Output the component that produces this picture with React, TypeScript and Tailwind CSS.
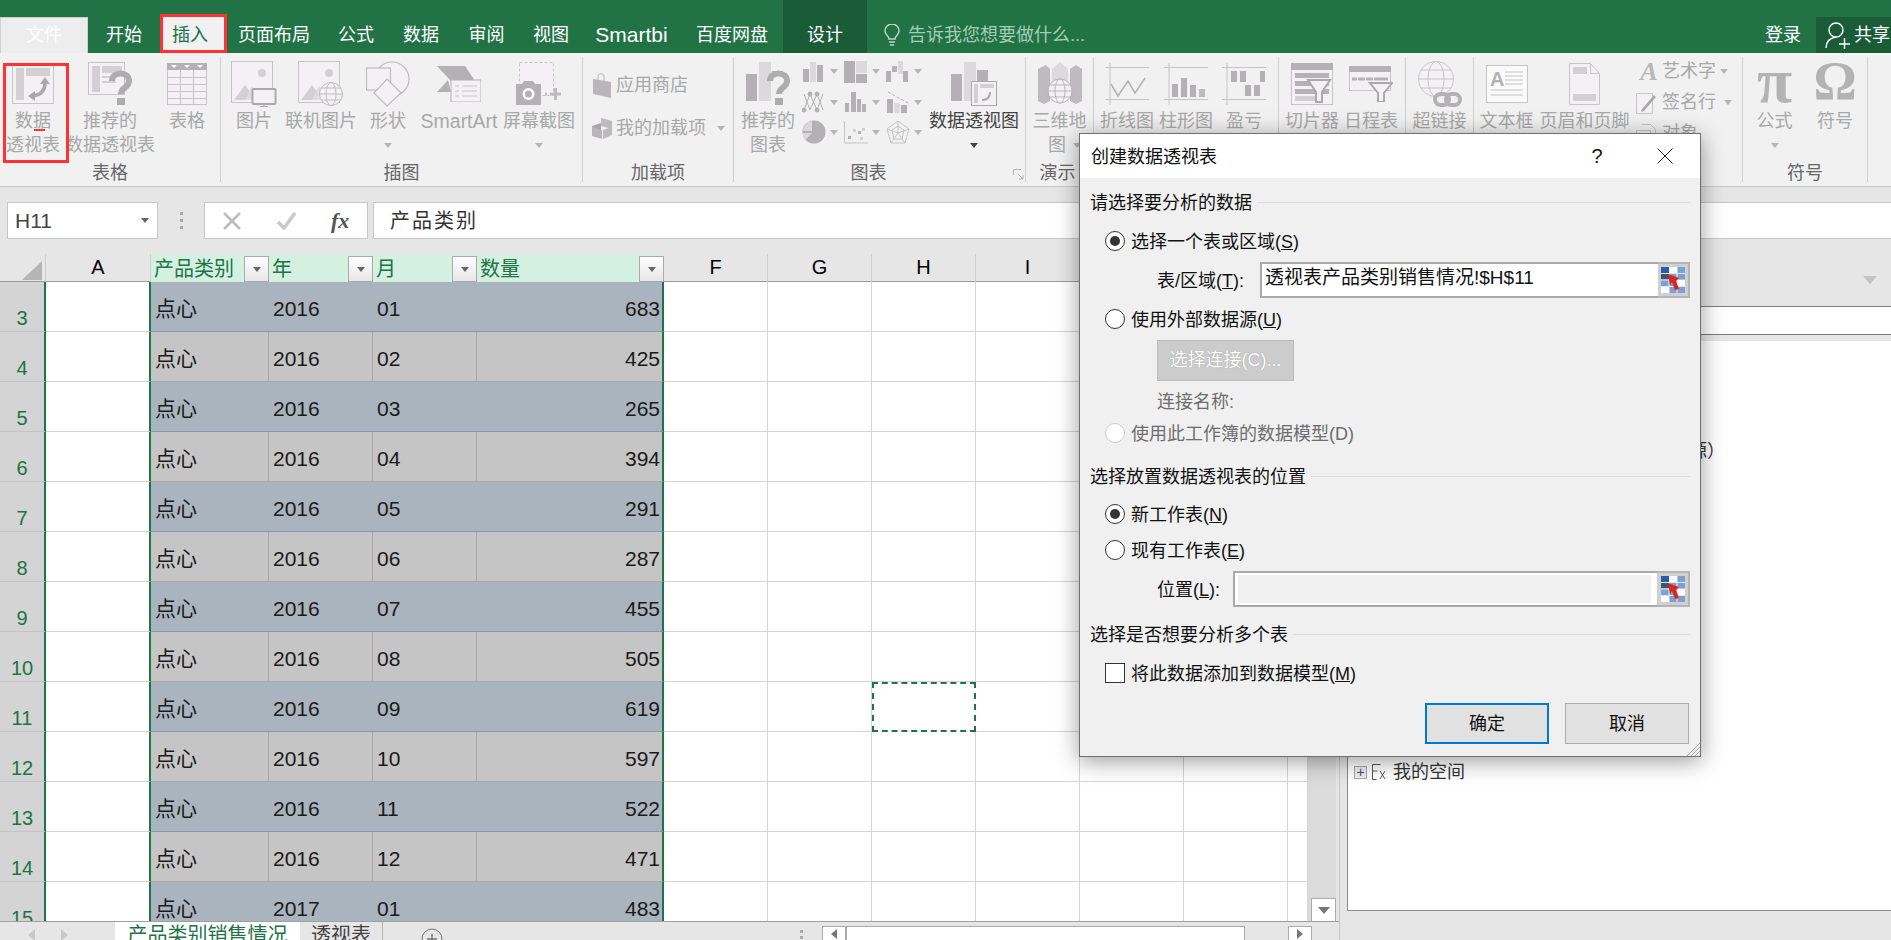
import type { ReactNode } from "react";
import clsx from "clsx";

const G = "#b3b1b3";
const M = "#d2d0d2";
const P = "#f4f1f5";
const S = "#c6c4c6";

const DATA = [683, 425, 265, 394, 291, 287, 455, 505, 619, 597, 522, 471, 483];
const EMPTY_COLS = ["F", "G", "H", "I", "J", "K", "L"];
const ROW_GRID = "grid grid-cols-[46px_105px_118px_104px_104px_187px_104px_104px_104px_104px_104px_104px_20px]";

function Arrow({ className, color = "#b5b5b5" }: { className?: string; color?: string }) {
  return (
    <svg width="8" height="5" viewBox="0 0 10 6" preserveAspectRatio="none" className={className}>
      <polygon points="0,0 10,0 5,6" fill={color} />
    </svg>
  );
}

function PivotIcon() {
  return (
    <svg width="42" height="40" viewBox="0 0 42 40">
      <rect x="0.5" y="0.5" width="41" height="39" fill={P} stroke={S} />
      <rect x="4" y="4" width="8" height="32" fill={M} />
      <rect x="14" y="4" width="24" height="8" fill={M} />
      <path d="M33 19C33 27 28 31 21 32" fill="none" stroke="#a9a9a9" strokeWidth="3.5" />
      <polygon points="33,13 38,20 28,20" fill="#a9a9a9" />
      <polygon points="16,32 23,27 23,37" fill="#a9a9a9" />
    </svg>
  );
}

function RecommendPivotIcon() {
  return (
    <svg width="45" height="44" viewBox="0 0 45 44">
      <rect x="0.5" y="0.5" width="36" height="32" fill={P} stroke={S} />
      <rect x="4" y="4" width="8" height="26" fill={M} />
      <rect x="14" y="4" width="20" height="7" fill={M} />
      <rect x="14" y="14" width="14" height="2" fill={M} />
      <rect x="14" y="19" width="14" height="2" fill={M} />
      <path d="M24 19C24 9 41 9 41 19C41 26 33 25 33 32" fill="none" stroke="#adadad" strokeWidth="6" />
      <rect x="29" y="36" width="8" height="7" fill="#adadad" />
    </svg>
  );
}

function TableIcon() {
  return (
    <svg width="40" height="42" viewBox="0 0 40 42">
      <rect x="0.5" y="0.5" width="39" height="41" fill={P} stroke={S} />
      <rect width="40" height="7" fill={G} />
      <path d="M4 2h6l-3 3zM17 2h6l-3 3zM30 2h6l-3 3z" fill="#fff" />
      <path d="M13.5 7v34M26.5 7v34M0 14.5h40M0 21.5h40M0 28.5h40M0 35.5h40" stroke={S} fill="none" />
    </svg>
  );
}

function PictureIcon({ overlay }: { overlay: "monitor" | "globe" }) {
  return (
    <svg width="46" height="46" viewBox="0 0 46 46">
      <rect x="0.5" y="0.5" width="41" height="41" fill={P} stroke={S} />
      <circle cx="31" cy="12" r="4" fill={M} />
      <polygon points="3,39 14,24 20,32 22,39" fill={M} />
      <polygon points="14,39 21,25 30,39" fill="#dedcde" />
      {overlay === "monitor" ? (
        <g>
          <rect x="21.5" y="28" width="23" height="15" rx="1" fill={P} stroke="#a9a9a9" strokeWidth="2" />
          <path d="M33 43v3M29 45.5h8" stroke="#a9a9a9" />
        </g>
      ) : (
        <g fill={P} stroke="#bdbdbd">
          <circle cx="33" cy="33" r="11.5" />
          <ellipse cx="33" cy="33" rx="5" ry="11.5" />
          <path d="M21.5 33h23M23 27h20M23 39h20" />
        </g>
      )}
    </svg>
  );
}

function ShapesIcon() {
  return (
    <svg width="44" height="46" viewBox="0 0 44 46" fill="none" stroke="#bdbdbd" strokeWidth="1.2">
      <circle cx="26" cy="18" r="17" fill={P} />
      <rect x="0.5" y="7" width="24" height="22" fill={P} />
      <polygon points="21,18 35,32 21,45 8,32" fill={P} />
    </svg>
  );
}

function SmartArtIcon() {
  return (
    <svg width="44" height="36" viewBox="0 0 44 36">
      <polygon points="0,0 28,0 38,15 14,15" fill={G} />
      <polygon points="0,26 14,26 11,14 " fill={G} />
      <rect x="14" y="14" width="30" height="22" fill={P} stroke={G} />
      <path d="M18 20h4M25 20h15M18 25h4M25 25h15M18 30h4M25 30h15" stroke={S} />
    </svg>
  );
}

function ScreenshotIcon() {
  return (
    <svg width="46" height="44" viewBox="0 0 46 44">
      <rect x="3.5" y="0.5" width="34" height="33" fill={P} stroke={S} strokeDasharray="3 2" />
      <path d="M0 22h6l2-3h9l2 3h6v21H0z" fill={G} />
      <circle cx="12.5" cy="32" r="6" fill="#fff" />
      <circle cx="12.5" cy="32" r="3.5" fill={G} />
      <path d="M29 32h2M34 32h11M39.5 26v12" stroke="#bdbdbd" strokeWidth="3" />
    </svg>
  );
}

function StoreIcon() {
  return (
    <svg width="20" height="25" viewBox="0 0 20 25">
      <path d="M1 6l18 3v16L1 21z" fill="#b8b6b8" />
      <path d="M6 7V3c0-3 6-3 6 0v5" fill="none" stroke="#b8b6b8" />
    </svg>
  );
}

function AddinIcon() {
  return (
    <svg width="20" height="21" viewBox="0 0 20 21">
      <polygon points="9,0 20,3 20,11 9,8" fill="#bdbbbd" />
      <polygon points="0,8 9,5 9,14 0,18" fill="#a9a7a9" />
      <polygon points="0,9 10,12 10,21 0,18" fill="#b8b6b8" />
      <polygon points="11,12 20,9 20,17 11,21" fill="#bdbbbd" />
    </svg>
  );
}

function RecommendChartIcon() {
  return (
    <svg width="45" height="44" viewBox="0 0 45 44">
      <rect x="0" y="12" width="11" height="27" fill={G} />
      <rect x="13" y="0" width="12" height="39" fill="#dcd9dc" />
      <rect x="26" y="9" width="11" height="5" fill={G} />
      <path d="M24 19C24 9 41 9 41 19C41 26 33 25 33 32" fill="none" stroke="#adadad" strokeWidth="6" />
      <rect x="29" y="36" width="8" height="7" fill="#adadad" />
    </svg>
  );
}

function PivotChartIcon() {
  return (
    <svg width="46" height="44" viewBox="0 0 46 44">
      <rect x="0" y="12" width="11" height="27" fill={G} />
      <rect x="13" y="0" width="12" height="39" fill="#dcd9dc" />
      <rect x="26" y="8" width="11" height="25" fill={G} />
      <rect x="20.5" y="19.5" width="25" height="24" fill={P} stroke="#a9a9a9" />
      <rect x="23" y="22" width="4" height="19" fill={M} />
      <rect x="29" y="22" width="14" height="4" fill={M} />
      <path d="M39 30c0 5-3 8-8 8" fill="none" stroke="#a9a9a9" strokeWidth="2" />
    </svg>
  );
}

function SmallChart({ kind }: { kind: string }) {
  return (
    <svg width="24" height="24" viewBox="0 0 24 24">
      {kind === "bar" && (
        <g fill={G}>
          <rect x="1" y="9" width="6" height="13" />
          <rect x="8" y="2" width="6" height="20" fill="#dcd9dc" />
          <rect x="15" y="5" width="6" height="17" />
        </g>
      )}
      {kind === "tree" && (
        <g>
          <rect x="0" y="1" width="11" height="22" fill={G} />
          <rect x="12" y="1" width="11" height="12" fill="#dcd9dc" />
          <rect x="12" y="14" width="11" height="9" fill={G} />
        </g>
      )}
      {kind === "fall" && (
        <g>
          <rect x="0" y="11" width="5" height="11" fill={G} />
          <rect x="6" y="6" width="5" height="6" fill={G} />
          <rect x="12" y="1" width="5" height="13" fill="#dcd9dc" />
          <rect x="17" y="11" width="5" height="11" fill={G} />
        </g>
      )}
      {kind === "net" && (
        <g fill="none" stroke={G} strokeWidth="1">
          <path d="M2 4l6 16 7-16 6 16M2 20l6-16 7 16 6-16" />
          <g fill={G}>
            <circle cx="2" cy="20" r="2" />
            <circle cx="8" cy="4" r="2" />
            <circle cx="15" cy="4" r="2" />
            <circle cx="15" cy="20" r="2" />
          </g>
        </g>
      )}
      {kind === "hist" && (
        <g fill={G}>
          <rect x="1" y="13" width="4" height="9" />
          <rect x="7" y="2" width="5" height="20" />
          <rect x="13" y="9" width="4" height="13" />
          <rect x="18" y="14" width="4" height="8" />
        </g>
      )}
      {kind === "combo" && (
        <g>
          <rect x="1" y="9" width="6" height="14" fill={G} />
          <rect x="8" y="13" width="6" height="10" fill="#dcd9dc" />
          <rect x="15" y="15" width="6" height="8" fill={G} />
          <path d="M2 2l20 11" stroke={G} strokeDasharray="3 2" />
        </g>
      )}
      {kind === "pie" && (
        <g>
          <circle cx="12" cy="12" r="11.5" fill={G} />
          <path d="M10 1A11 11 0 0 0 1 11H10z" fill="#dcd9dc" />
          <path d="M1 13H10L3 20A11 11 0 0 1 1 13z" fill="#dcd9dc" />
        </g>
      )}
      {kind === "scatter" && (
        <g fill={G}>
          <path d="M0.5 1v22H24" fill="none" stroke={S} />
          <rect x="4" y="16" width="3" height="3" />
          <rect x="9" y="9" width="3" height="3" fill={M} />
          <rect x="14" y="11" width="3" height="3" />
          <rect x="18" y="8" width="3" height="3" fill={M} />
          <rect x="16" y="17" width="3" height="3" fill={M} />
        </g>
      )}
      {kind === "radar" && (
        <g fill="none" stroke={S}>
          <polygon points="12,1 23,9 19,23 5,23 1,9" />
          <polygon points="12,6 18,10 16,19 8,19 6,10" />
          <path d="M12 1v12M23 9L12 13M19 23L12 13M5 23L12 13M1 9L12 13" />
        </g>
      )}
    </svg>
  );
}

function MapIcon() {
  return (
    <svg width="44" height="44" viewBox="0 0 44 44">
      <polygon points="0,7 8,3 12,7 12,39 6,42 0,39" fill="#bdbbbd" />
      <polygon points="14,7 22,0 30,7 30,39 14,39" fill="#dcd9dc" />
      <polygon points="32,7 38,3 44,7 44,39 38,42 32,39" fill="#bdbbbd" />
      <g fill={P} stroke="#b5b5b5">
        <circle cx="22" cy="29" r="12" />
        <ellipse cx="22" cy="29" rx="5" ry="12" />
        <path d="M10 29h24M12 23h20M12 35h20" />
      </g>
    </svg>
  );
}

function SparkIcon({ kind }: { kind: "line" | "col" | "win" }) {
  return (
    <svg width="44" height="42" viewBox="0 0 44 42">
      <path d="M5 0v42M0 4.5h44M0 36.5h44" stroke={S} fill="none" />
      {kind === "line" && <path d="M6 21l7 12 10-15 7 12 10-15" fill="none" stroke={G} strokeWidth="1.5" />}
      {kind === "col" && (
        <g fill={G}>
          <rect x="8" y="21" width="6" height="13" />
          <rect x="17" y="15" width="6" height="19" />
          <rect x="26" y="22" width="6" height="12" />
          <rect x="35" y="26" width="6" height="8" fill="#bdbbbd" />
        </g>
      )}
      {kind === "win" && (
        <g fill={G}>
          <rect x="9" y="8" width="6" height="11" />
          <rect x="18" y="8" width="6" height="11" />
          <rect x="23" y="22" width="6" height="11" />
          <rect x="32" y="22" width="6" height="11" />
          <rect x="38" y="8" width="5" height="11" />
        </g>
      )}
    </svg>
  );
}

function SlicerIcon() {
  return (
    <svg width="42" height="42" viewBox="0 0 42 42">
      <rect x="0.5" y="0.5" width="41" height="41" fill={P} stroke={S} />
      <rect width="42" height="7" fill={G} />
      <rect x="4" y="10" width="34" height="5" fill={G} />
      <rect x="4" y="18" width="34" height="5" fill={G} />
      <rect x="4" y="26" width="34" height="5" fill={G} />
      <rect x="4" y="33" width="20" height="5" fill={M} />
      <path d="M17 17h22l-8 12v10h-6V29z" fill={P} stroke="#a9a9a9" strokeWidth="2" />
    </svg>
  );
}

function TimelineIcon() {
  return (
    <svg width="44" height="36" viewBox="0 0 44 36">
      <rect x="0.5" y="0.5" width="41" height="24" fill={P} stroke={S} />
      <rect width="42" height="6" fill={G} />
      <path d="M3 13h5M9 13h7M17 13h7M25 13h14" stroke={G} strokeWidth="3" />
      <path d="M21 17h22l-8 10v9h-6v-9z" fill={P} stroke="#a9a9a9" strokeWidth="2" />
    </svg>
  );
}

function LinkIcon() {
  return (
    <svg width="44" height="46" viewBox="0 0 44 46">
      <g fill={P} stroke={S}>
        <circle cx="18" cy="18" r="17.5" />
        <ellipse cx="18" cy="18" rx="8" ry="17.5" />
        <path d="M0.5 18h35M3 9h30M3 27h30" />
      </g>
      <g fill="none" stroke={G} strokeWidth="4">
        <rect x="17" y="33" width="14" height="11" rx="5.5" />
        <rect x="28" y="33" width="14" height="11" rx="5.5" />
      </g>
    </svg>
  );
}

function TextBoxIcon() {
  return (
    <svg width="42" height="38" viewBox="0 0 42 38">
      <rect x="0.5" y="0.5" width="41" height="37" fill="#fafafa" stroke={S} />
      <text x="4" y="21" fontSize="20" fontFamily="Liberation Sans" fontWeight="700" fill={G}>
        A
      </text>
      <path d="M19 7h18M19 11h18M19 15h18M19 19h18M5 25h32M5 30h32" stroke={S} />
    </svg>
  );
}

function HeaderIcon() {
  return (
    <svg width="31" height="42" viewBox="0 0 31 42">
      <path d="M0.5 0.5h21l9 10v31h-30z" fill={P} stroke={S} />
      <path d="M21.5 0.5v10h9" fill="none" stroke={S} />
      <rect x="4" y="4" width="14" height="7" fill={M} />
      <rect x="4" y="31" width="23" height="7" fill={M} />
    </svg>
  );
}

function SignIcon() {
  return (
    <svg width="22" height="22" viewBox="0 0 22 22">
      <path d="M0.5 1.5h16v20h-16z" fill={P} stroke={S} />
      <path d="M6 17L18 3l2 2L8 19l-3 1z" fill="#a9a9a9" />
    </svg>
  );
}

function RefIcon() {
  return (
    <svg width="24" height="26" viewBox="0 0 24 26">
      <rect x="0" y="0" width="24" height="26" fill="#7ea0cf" />
      <path d="M0 6.5h24M0 13h24M0 19.5h24M8 0v26M16 0v26" stroke="#dfe8f4" strokeWidth="1.2" />
      <rect x="0" y="0" width="8" height="6" fill="#2a5ca8" />
      <rect x="0" y="7" width="8" height="5" fill="#40536e" />
      <rect x="8" y="0" width="8" height="6" fill="#fff" />
      <rect x="16" y="13" width="8" height="6" fill="#fff" />
      <rect x="0" y="20" width="8" height="6" fill="#fff" />
      <polygon points="7,7 18,11 15,14 18,22 14,23 11,15 9,18" fill="#d9251c" />
    </svg>
  );
}

function Label({ children, className }: { children: ReactNode; className?: string }) {
  return <div className={clsx("whitespace-nowrap leading-[24px]", className)}>{children}</div>;
}

function Btn({
  cls,
  icon,
  lines,
  arrow,
  dark,
}: {
  cls: string;
  icon: ReactNode;
  lines: ReactNode[];
  arrow?: boolean;
  dark?: boolean;
}) {
  return (
    <div className={clsx("flex flex-col items-center text-[18px]", dark ? "text-[#444444]" : "text-[#a8a8a8]", cls)}>
      <div className="h-[56px] pt-[6px] flex items-center justify-center shrink-0">{icon}</div>
      {lines.map((l, i) => (
        <Label key={i}>{l}</Label>
      ))}
      {arrow && lines.length === 1 && (
        <div className="h-[24px] flex items-center">
          <Arrow color={dark ? "#444444" : "#b5b5b5"} />
        </div>
      )}
    </div>
  );
}

function Group({
  cls,
  label,
  children,
  labelCls,
}: {
  cls: string;
  label: string;
  children: ReactNode;
  labelCls?: string;
}) {
  return (
    <div className={clsx("flex flex-col h-[133px] shrink-0 relative", cls)}>
      <div className="h-[108px] flex">{children}</div>
      <div className={clsx("text-center text-[18px] leading-[24px] text-[#666666]", labelCls)}>{label}</div>
    </div>
  );
}

function Sep() {
  return <div className="w-px h-[125px] mt-[4px] bg-[#cfcfcf] shrink-0" />;
}

function Tab({ cls, children }: { cls: string; children: ReactNode }) {
  return <div className={clsx("h-[36px] flex items-center justify-center text-white shrink-0", cls)}>{children}</div>;
}

function TitleBar() {
  return (
    <div className="h-[53px] bg-[#217346] flex items-end text-[18px] whitespace-nowrap shrink-0">
      <Tab cls="w-[88px] bg-[#ededed] border border-[#cfcfcf] border-b-0">文件</Tab>
      <Tab cls="w-[72px]">开始</Tab>
      <div className="w-[65px] h-[36px] bg-[#f1f1f1] text-[#217346] flex items-center justify-center pr-[5px] shrink-0">插入</div>
      <Tab cls="w-[98px]">页面布局</Tab>
      <Tab cls="w-[66px]">公式</Tab>
      <Tab cls="w-[64px]">数据</Tab>
      <Tab cls="w-[67px]">审阅</Tab>
      <Tab cls="w-[62px]">视图</Tab>
      <Tab cls="w-[99px] text-[21px]">Smartbi</Tab>
      <Tab cls="w-[102px]">百度网盘</Tab>
      <div className="w-[84px] h-[53px] bg-[#1a5c38] text-white flex items-end justify-center shrink-0">
        <span className="h-[36px] leading-[36px]">设计</span>
      </div>
      <div className="h-[36px] flex items-center ml-[17px] text-[#a3cdb5]">
        <svg width="16" height="22" viewBox="0 0 16 22" fill="none" stroke="#b9d9c7" strokeWidth="1.5">
          <path d="M5 15c0-3-4-4-4-8a7 7 0 0 1 14 0c0 4-4 5-4 8z" />
          <path d="M5 18h6M6 21h4" />
        </svg>
        <span className="ml-[8px]">告诉我您想要做什么...</span>
      </div>
      <div className="flex-1" />
      <div className="h-[36px] leading-[36px] text-white mr-[15px]">登录</div>
      <div className="w-[75px] h-[36px] bg-[#1a5c38] text-white flex items-center pl-[9px] shrink-0 overflow-hidden">
        <svg width="26" height="28" viewBox="0 0 26 28" fill="none" stroke="#fff" strokeWidth="1.4" className="shrink-0">
          <circle cx="11" cy="9" r="7" />
          <path d="M1 27c0-7 4-10 10-11" />
          <path d="M14 23h11M19.5 17v11" />
        </svg>
        <span className="ml-[3px]">共享</span>
      </div>
    </div>
  );
}

function Ribbon() {
  const smallCharts = ["bar", "tree", "fall", "net", "hist", "combo", "pie", "scatter", "radar"];
  return (
    <div className="h-[134px] bg-[#f1f1f1] border-b border-[#c6c6c6] flex shrink-0 whitespace-nowrap">
      <Group cls="w-[220px]" label="表格">
        <Btn cls="w-[66px]" icon={<PivotIcon />} lines={["数据", "透视表"]} />
        <Btn cls="w-[88px]" icon={<RecommendPivotIcon />} lines={["推荐的", "数据透视表"]} />
        <Btn cls="w-[66px]" icon={<TableIcon />} lines={["表格"]} />
      </Group>
      <Sep />
      <Group cls="w-[361px]" label="插图">
        <Btn cls="w-[66px]" icon={<PictureIcon overlay="monitor" />} lines={["图片"]} />
        <Btn cls="w-[68px]" icon={<PictureIcon overlay="globe" />} lines={["联机图片"]} />
        <Btn cls="w-[66px]" icon={<ShapesIcon />} lines={["形状"]} arrow />
        <Btn cls="w-[76px]" icon={<SmartArtIcon />} lines={[<span key="s" className="text-[19.5px]">SmartArt</span>]} />
        <Btn cls="w-[84px]" icon={<ScreenshotIcon />} lines={["屏幕截图"]} arrow />
      </Group>
      <Sep />
      <Group cls="w-[150px]" label="加载项">
        <div className="pl-[9px] pt-[20px] flex flex-col gap-[18px] text-[18px] text-[#a8a8a8]">
          <div className="flex items-center gap-[4px] h-[25px]">
            <StoreIcon />
            <span>应用商店</span>
          </div>
          <div className="flex items-center gap-[4px] h-[25px]">
            <AddinIcon />
            <span>我的加载项</span>
            <Arrow className="ml-[7px]" />
          </div>
        </div>
      </Group>
      <Sep />
      <Group cls="w-[291px]" label="图表" labelCls="pr-[22px]">
        <Btn cls="w-[68px] shrink-0" icon={<RecommendChartIcon />} lines={["推荐的", "图表"]} />
        <div className="w-[122px] shrink-0 pt-[3px] grid grid-cols-[42px_42px_38px] grid-rows-[31px_30px_30px]">
          {smallCharts.map((k) => (
            <div key={k} className="flex items-center gap-[4px]">
              <SmallChart kind={k} />
              <Arrow />
            </div>
          ))}
        </div>
        <Btn cls="w-[100px] shrink-0" icon={<PivotChartIcon />} lines={["数据透视图"]} arrow dark />
        <svg width="11" height="11" viewBox="0 0 11 11" fill="none" stroke="#b5b5b5" className="absolute left-[279px] top-[116px]">
          <path d="M0.5 6V0.5H8M5 5l5 5M6 10h4V6" />
        </svg>
      </Group>
      <Sep />
      <Group cls="w-[67px]" label="演示" labelCls="pr-[4px]">
        <Btn
          cls="w-[67px]"
          icon={<MapIcon />}
          lines={[
            "三维地",
            <span key="m" className="flex items-center gap-[7px] pl-[10px]">
              图
              <Arrow />
            </span>,
          ]}
        />
      </Group>
      <Sep />
      <Group cls="w-[184px]" label="迷你图">
        <Btn cls="w-[66px]" icon={<SparkIcon kind="line" />} lines={["折线图"]} />
        <Btn cls="w-[52px]" icon={<SparkIcon kind="col" />} lines={["柱形图"]} />
        <Btn cls="w-[64px]" icon={<SparkIcon kind="win" />} lines={["盈亏"]} />
      </Group>
      <Sep />
      <Group cls="w-[126px]" label="筛选器">
        <Btn cls="w-[66px]" icon={<SlicerIcon />} lines={["切片器"]} />
        <Btn cls="w-[52px]" icon={<TimelineIcon />} lines={["日程表"]} />
      </Group>
      <Sep />
      <Group cls="w-[67px]" label="链接">
        <Btn cls="w-[67px]" icon={<LinkIcon />} lines={["超链接"]} />
      </Group>
      <Sep />
      <Group cls="w-[268px]" label="文本">
        <Btn cls="w-[65px]" icon={<TextBoxIcon />} lines={["文本框"]} />
        <Btn cls="w-[91px]" icon={<HeaderIcon />} lines={["页眉和页脚"]} />
        <div className="pl-[6px] pt-[3px] flex flex-col text-[18px] text-[#a8a8a8]">
          <div className="h-[31px] flex items-center">
            <span className="w-[26px] text-center font-['Liberation_Serif'] italic font-bold text-[26px] text-[#b8b8b8]">A</span>
            <span>艺术字</span>
            <Arrow className="ml-[4px]" />
          </div>
          <div className="h-[31px] flex items-center">
            <span className="w-[26px]">
              <SignIcon />
            </span>
            <span>签名行</span>
            <Arrow className="ml-[8px]" />
          </div>
          <div className="h-[31px] flex items-center">
            <span className="w-[26px]">
              <svg width="20" height="20" viewBox="0 0 20 20" fill={P} stroke={S}>
                <path d="M0.5 6.5h14v13h-14zM5.5 0.5h9l5 5v10h-5" />
              </svg>
            </span>
            <span>对象</span>
          </div>
        </div>
      </Group>
      <Sep />
      <Group cls="w-[124px]" label="符号">
        <div className="w-[63px] flex flex-col items-center text-[18px] text-[#a8a8a8]">
          <div className="h-[56px] flex items-center justify-center font-['Liberation_Serif'] font-bold text-[64px] leading-none text-[#b3b3b3]">π</div>
          <Label>公式</Label>
          <div className="h-[24px] flex items-center">
            <Arrow />
          </div>
        </div>
        <div className="w-[58px] flex flex-col items-center text-[18px] text-[#a8a8a8]">
          <div className="h-[56px] flex items-center justify-center font-['Liberation_Serif'] font-bold text-[54px] leading-none text-[#b3b3b3]">Ω</div>
          <Label>符号</Label>
        </div>
      </Group>
      <Sep />
    </div>
  );
}

function FormulaBar() {
  return (
    <div className="h-[67px] bg-[#e6e6e6] pt-[15px] flex items-start shrink-0">
      <div className="ml-[7px] w-[151px] h-[37px] bg-white border border-[#c6c6c6] flex items-center justify-between pl-[7px] pr-[8px] text-[21px] text-[#444444]">
        H11
        <Arrow color="#666666" />
      </div>
      <div className="w-[46px] h-[37px] flex flex-col items-center justify-center gap-[4px]">
        <span className="w-[3px] h-[3px] bg-[#a9a9a9]" />
        <span className="w-[3px] h-[3px] bg-[#a9a9a9]" />
        <span className="w-[3px] h-[3px] bg-[#a9a9a9]" />
      </div>
      <div className="w-[164px] h-[37px] bg-white border border-[#c6c6c6] flex items-center pl-[18px]">
        <svg width="18" height="18" viewBox="0 0 18 18" stroke="#bdbdbd" strokeWidth="2.5" fill="none">
          <path d="M1 1l16 16M17 1L1 17" />
        </svg>
        <svg width="20" height="18" viewBox="0 0 20 18" stroke="#c9c9c9" strokeWidth="3.5" fill="none" className="ml-[36px]">
          <path d="M1 10l6 6L18 1" />
        </svg>
        <span className="ml-[34px] font-['Liberation_Serif'] italic font-bold text-[22px] text-[#555555]">fx</span>
      </div>
      <div className="ml-[5px] flex-1 h-[37px] bg-white border border-[#c6c6c6] border-r-0 pl-[16px] flex items-center text-[20px] tracking-[2px] text-[#333333]">
        产品类别
      </div>
    </div>
  );
}

function HeaderCell({ children }: { children: ReactNode }) {
  return (
    <div className="bg-[#d3f0e0] text-[#217346] text-[20px] flex items-center justify-between pl-[3px]">
      <span>{children}</span>
      <span className="w-[25px] h-[26px] bg-gradient-to-b from-white to-[#e6e6e6] border border-[#ababab] flex items-center justify-center">
        <Arrow color="#666666" />
      </span>
    </div>
  );
}

function SheetHeader() {
  return (
    <div className={clsx(ROW_GRID, "h-[27px] bg-[#e6e6e6] border-b border-[#9b9b9b] text-black text-[20px] box-content")}>
      <div className="flex items-end justify-end pr-[3px] pb-[4px] border-r border-[#cfcfcf]">
        <svg width="20" height="19" viewBox="0 0 20 19">
          <polygon points="20,0 20,19 0,19" fill="#b5b5b5" />
        </svg>
      </div>
      <div className="text-center border-r border-[#cfcfcf] leading-[27px] font-medium">A</div>
      <HeaderCell>产品类别</HeaderCell>
      <HeaderCell>年</HeaderCell>
      <HeaderCell>月</HeaderCell>
      <HeaderCell>数量</HeaderCell>
      {EMPTY_COLS.map((c) => (
        <div key={c} className="text-center border-r border-[#cfcfcf] leading-[27px]">
          {c}
        </div>
      ))}
    </div>
  );
}

function DataRow({ row, qty, month, year }: { row: number; qty: number; month: string; year: string }) {
  const blue = row % 2 === 1;
  const cell = clsx(
    "flex items-center pt-[4px] pl-[4px] border-b",
    blue ? "bg-[#aab4bf] border-[#8499ae]" : "bg-[#c5c5c5] border-[#a9a9a9]",
  );
  return (
    <div className={clsx(ROW_GRID, "h-[50px] text-[21px] text-[#1a1a1a] shrink-0")}>
      <div className="bg-[#d4d4d4] border-r-2 border-r-[#217346] border-b border-b-[#c4c4c4] flex items-end justify-center text-[20px] text-[#217346] leading-[26px]">
        {row}
      </div>
      <div className="bg-white border-r-2 border-r-[#217346] border-b border-b-[#d4d4d4]" />
      <div className={clsx(cell, !blue && "border-r border-r-[#a9a9a9]")}>点心</div>
      <div className={clsx(cell, !blue && "border-r border-r-[#a9a9a9]")}>{year}</div>
      <div className={clsx(cell, !blue && "border-r border-r-[#a9a9a9]")}>{month}</div>
      <div className={clsx(cell, "justify-end pr-[2px] border-r-2 border-r-[#217346]")}>{qty}</div>
      {EMPTY_COLS.map((c) => (
        <div
          key={c}
          className={
            c === "H" && row === 11
              ? "bg-white border-2 border-dashed border-[#217346]"
              : "bg-white border-r border-b border-[#d4d4d4]"
          }
        />
      ))}
    </div>
  );
}

function SheetTabs() {
  return (
    <div className="h-[18px] bg-[#e6e6e6] border-t border-[#9f9f9f] flex items-start shrink-0 overflow-hidden box-content -mt-px">
      <div className="w-[115px] h-[18px] relative flex items-center pl-[28px] gap-[26px] shrink-0">
        <svg width="7" height="12" viewBox="0 0 7 12" className="mt-[8px]">
          <polygon points="7,0 7,12 0,6" fill="#c9c9c9" />
        </svg>
        <svg width="7" height="12" viewBox="0 0 7 12" className="mt-[8px]">
          <polygon points="0,0 0,12 7,6" fill="#c9c9c9" />
        </svg>
      </div>
      <div className="w-[185px] h-[20px] bg-white text-center text-[20px] leading-[24px] pt-[1px] text-[#217346] shrink-0">产品类别销售情况</div>
      <div className="w-[83px] h-[20px] text-center text-[20px] leading-[24px] pt-[1px] text-[#444444] border-r border-[#b5b5b5] shrink-0">透视表</div>
      <svg width="22" height="22" viewBox="0 0 22 22" fill="none" stroke="#777777" className="ml-[38px] mt-[6px] shrink-0">
        <circle cx="11" cy="11" r="10" />
        <path d="M11 6v10M6 11h10" strokeWidth="1.5" />
      </svg>
      <div className="ml-[357px] w-[3px] mt-[8px] flex flex-col gap-[3px] shrink-0">
        <span className="h-[3px] bg-[#a9a9a9]" />
        <span className="h-[3px] bg-[#a9a9a9]" />
      </div>
      <div className="ml-[19px] mt-[4px] w-[24px] h-[16px] bg-white border border-[#ababab] flex items-center justify-center shrink-0">
        <svg width="6" height="10" viewBox="0 0 6 10">
          <polygon points="6,0 6,10 0,5" fill="#777777" />
        </svg>
      </div>
      <div className="mt-[4px] w-[399px] h-[16px] bg-white border border-[#ababab] shrink-0" />
      <div className="ml-[43px] mt-[4px] w-[24px] h-[16px] bg-white border border-[#ababab] flex items-center justify-center shrink-0">
        <svg width="6" height="10" viewBox="0 0 6 10">
          <polygon points="0,0 0,10 6,5" fill="#777777" />
        </svg>
      </div>
    </div>
  );
}

function Sheet() {
  return (
    <div className="w-[1340px] flex flex-col shrink-0 border-r border-[#c6c6c6]">
      <div className="flex h-[668px]">
        <div className="w-[1308px] shrink-0 flex flex-col overflow-hidden">
          <SheetHeader />
          {DATA.map((qty, i) => (
            <DataRow
              key={i}
              row={i + 3}
              qty={qty}
              year={i < 12 ? "2016" : "2017"}
              month={String(i < 12 ? i + 1 : 1).padStart(2, "0")}
            />
          ))}
        </div>
        <div className="w-[28px] shrink-0 bg-[#dbdbdb] flex flex-col justify-end items-end">
          <div className="w-[25px] h-[24px] bg-white border border-[#ababab] flex items-center justify-center">
            <Arrow color="#777777" className="w-[12px] h-[7px]" />
          </div>
        </div>
      </div>
      <SheetTabs />
    </div>
  );
}

function Pane() {
  return (
    <div className="flex-1 bg-[#e6e6e6] pl-[7px] flex flex-col">
      <div className="h-[52px] flex items-center justify-end pr-[14px] shrink-0">
        <Arrow color="#c4c4c4" className="w-[14px] h-[8px]" />
      </div>
      <div className="h-[27px] -ml-[7px] bg-white border-y border-[#7d7d7d] shrink-0 box-content" />
      <div className="h-[570px] bg-white border-l border-b border-[#8a8a8a] relative text-[18px] text-[#333333] shrink-0 mt-[6px]">
        <div className="pt-[98px] pr-[166px] text-right leading-[24px]">（数据源）</div>
        <div className="mt-[276px] h-[21px] flex items-center pl-[6px] text-[#333333]">
          <span className="w-[13px] h-[13px] border border-[#8a8a8a] bg-[#eeeeee]" />
          <span className="ml-[5px]">公共空间</span>
        </div>
        <div className="h-[24px] flex items-center pl-[6px]">
          <span className="w-[13px] h-[13px] border border-[#a9a9a9] bg-[#eeeeee] flex items-center justify-center text-[#2b4f8f] text-[14px] leading-none">+</span>
          <svg width="14" height="16" viewBox="0 0 14 16" fill="none" stroke="#555555" className="ml-[5px]">
            <path d="M0.5 0.5h8M0.5 0.5v15h4M0.5 7h5M13 7l-5 8M8 7l5 8" />
          </svg>
          <span className="ml-[7px]">我的空间</span>
        </div>
      </div>
    </div>
  );
}

function Radio({ on, off }: { on?: boolean; off?: boolean }) {
  return (
    <span
      className={clsx(
        "w-[20px] h-[20px] rounded-full border flex items-center justify-center shrink-0 bg-white",
        off ? "border-[#cccccc]" : "border-[#333333]",
      )}
    >
      {on && <span className="w-[10px] h-[10px] rounded-full bg-[#333333]" />}
    </span>
  );
}

function Section({ cls, children }: { cls: string; children: ReactNode }) {
  return (
    <div className={clsx("h-[24px] flex items-center gap-[5px] leading-[24px]", cls)}>
      <span className="pt-[2px]">{children}</span>
      <span className="flex-1 h-px bg-[#dcdcdc]" />
    </div>
  );
}

function Option({ cls, on, off, children }: { cls: string; on?: boolean; off?: boolean; children: ReactNode }) {
  return (
    <div className={clsx("h-[24px] pl-[15px] flex items-center gap-[6px]", off && "text-[#6d6d6d]", cls)}>
      <Radio on={on} off={off} />
      <span className="pt-[2px]">{children}</span>
    </div>
  );
}

function Dialog() {
  return (
    <div className="absolute left-[1079px] top-[133px] w-[622px] h-[624px] bg-[#f0f0f0] border border-[#6f6f6f] shadow-[0_4px_22px_rgba(0,0,0,0.4)] text-[18px] text-[#111111] whitespace-nowrap">
      <div className="h-[44px] bg-white flex items-center pl-[11px]">
        <span className="flex-1 pt-[2px]">创建数据透视表</span>
        <span className="text-[20px] w-[20px] text-center mr-[50px]">?</span>
        <svg width="16" height="16" viewBox="0 0 16 16" stroke="#222222" fill="none" className="mr-[27px]">
          <path d="M0.5 0.5l15 15M15.5 0.5l-15 15" />
        </svg>
      </div>
      <div className="px-[10px]">
        <Section cls="mt-[12px]">请选择要分析的数据</Section>
        <Option cls="mt-[15px]" on>
          选择一个表或区域(<u>S</u>)
        </Option>
        <div className="mt-[9px] h-[36px] flex items-center">
          <span className="w-[170px] pl-[67px] pt-[2px]">
            表/区域(<u>T</u>):
          </span>
          <div className="flex-1 h-[36px] bg-white border-2 border-[#a9a9a9] border-r-0 pl-[3px] pb-[4px] flex items-center text-[19px]">
            透视表产品类别销售情况!$H$11
          </div>
          <div className="w-[32px] h-[36px] bg-[#d0d0d0] border-2 border-l-0 border-[#b5b5b5] flex items-center justify-center">
            <RefIcon />
          </div>
        </div>
        <Option cls="mt-[9px]">
          使用外部数据源(<u>U</u>)
        </Option>
        <div className="mt-[9px] ml-[67px] w-[137px] h-[41px] bg-[#cccccc] border border-[#bcbcbc] flex items-center justify-center text-white [text-shadow:0_0_1px_#8f8f8f]">
          选择连接(C)...
        </div>
        <div className="mt-[8px] ml-[67px] h-[24px] leading-[24px] pt-[1px] text-[#6d6d6d]">连接名称:</div>
        <Option cls="mt-[8px]" off>
          使用此工作簿的数据模型(D)
        </Option>
        <Section cls="mt-[19px]">选择放置数据透视表的位置</Section>
        <Option cls="mt-[14px]" on>
          新工作表(<u>N</u>)
        </Option>
        <Option cls="mt-[12px]">
          现有工作表(<u>E</u>)
        </Option>
        <div className="mt-[9px] h-[36px] flex items-center">
          <span className="w-[143px] pl-[67px] pt-[2px]">
            位置(<u>L</u>):
          </span>
          <div className="flex-1 h-[36px] bg-white border-2 border-[#a9a9a9] border-r-0 py-[2px] pl-[3px] pr-[6px]">
            <div className="w-full h-full bg-[#f0f0f0]" />
          </div>
          <div className="w-[33px] h-[36px] bg-[#d0d0d0] border-2 border-l-0 border-[#b5b5b5] flex items-center justify-center">
            <RefIcon />
          </div>
        </div>
        <Section cls="mt-[15px]">选择是否想要分析多个表</Section>
        <div className="mt-[15px] h-[24px] pl-[15px] flex items-center gap-[6px]">
          <span className="w-[20px] h-[20px] bg-white border border-[#333333] shrink-0" />
          <span className="pt-[2px]">
            将此数据添加到数据模型(<u>M</u>)
          </span>
        </div>
        <div className="mt-[18px] flex justify-end gap-[16px] pr-px">
          <div className="w-[124px] h-[41px] pt-[2px] bg-[#e1e1e1] border-2 border-[#0078d7] flex items-center justify-center">确定</div>
          <div className="w-[124px] h-[41px] pt-[2px] bg-[#e1e1e1] border border-[#adadad] flex items-center justify-center">取消</div>
        </div>
      </div>
      <svg width="14" height="14" viewBox="0 0 14 14" stroke="#a9a9a9" className="absolute right-0 bottom-0">
        <path d="M14 1L1 14M14 5L5 14M14 9l-5 5" />
      </svg>
    </div>
  );
}

export default function App() {
  return (
    <div className="w-[1891px] h-[940px] overflow-hidden relative flex flex-col bg-[#e6e6e6] font-['Liberation_Sans','Noto_Sans_CJK_SC',sans-serif]">
      <TitleBar />
      <Ribbon />
      <FormulaBar />
      <div className="flex flex-1 min-h-0">
        <Sheet />
        <Pane />
      </div>
      <Dialog />
      {/* red annotation boxes drawn over the ribbon */}
      <div className="absolute left-[160px] top-[14px] w-[67px] h-[39px] border-[3px] border-[#ff3333]" />
      <div className="absolute left-[3px] top-[63px] w-[66px] h-[100px] border-[3px] border-[#ff3333]" />
      <div className="absolute left-[34px] top-[129px] w-[11px] h-[2px] bg-[#ff3333]" />
    </div>
  );
}
